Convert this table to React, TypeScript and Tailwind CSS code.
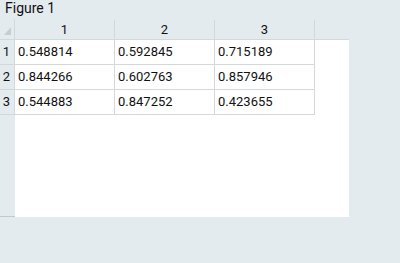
const data = [
  ["0.548814", "0.592845", "0.715189"],
  ["0.844266", "0.602763", "0.857946"],
  ["0.544883", "0.847252", "0.423655"],
];

export default function App() {
  return (
    <div className="flex h-[263px] w-[400px] flex-col bg-[#e4ebef] font-['Roboto',sans-serif] text-[13px] text-[#111]">
      <div className="h-[19px] pl-[5px] text-[14px] leading-[17px]">Figure 1</div>
      <div className="flex h-[198px] w-[349px]">
        {/* row headers */}
        <div className="flex w-[15px] flex-col">
          <div className="flex h-[21px] items-end justify-end border-r border-b border-[#d3d8db] pr-[3px] pb-[4px]">
            <svg width="7" height="8" viewBox="0 0 7 8">
              <polygon points="7,0 7,8 0,8" fill="#c9cdd0" />
            </svg>
          </div>
          {data.map((_, i) => (
            <div
              key={i}
              className="flex h-[25px] items-center justify-center border-r border-b border-[#d3d8db] pr-[1px]"
            >
              {i + 1}
            </div>
          ))}
          <div className="flex-1 border-b border-[#c3c8cb]" />
        </div>
        {/* grid */}
        <div className="flex flex-1 flex-col">
          <div className="flex h-[21px] border-b border-[#d3d8db] pt-[1px]">
            {[1, 2, 3].map((c) => (
              <div
                key={c}
                className="flex w-[100px] items-center justify-center border-r border-[#d3d8db]"
              >
                {c}
              </div>
            ))}
          </div>
          <div className="flex-1 bg-white">
            {data.map((row, i) => (
              <div key={i} className="flex h-[25px]">
                {row.map((v, j) => (
                  <div
                    key={j}
                    className="flex w-[100px] items-center border-r border-b border-[#d3d8db] pl-[3px]"
                  >
                    {v}
                  </div>
                ))}
              </div>
            ))}
          </div>
        </div>
      </div>
    </div>
  );
}
